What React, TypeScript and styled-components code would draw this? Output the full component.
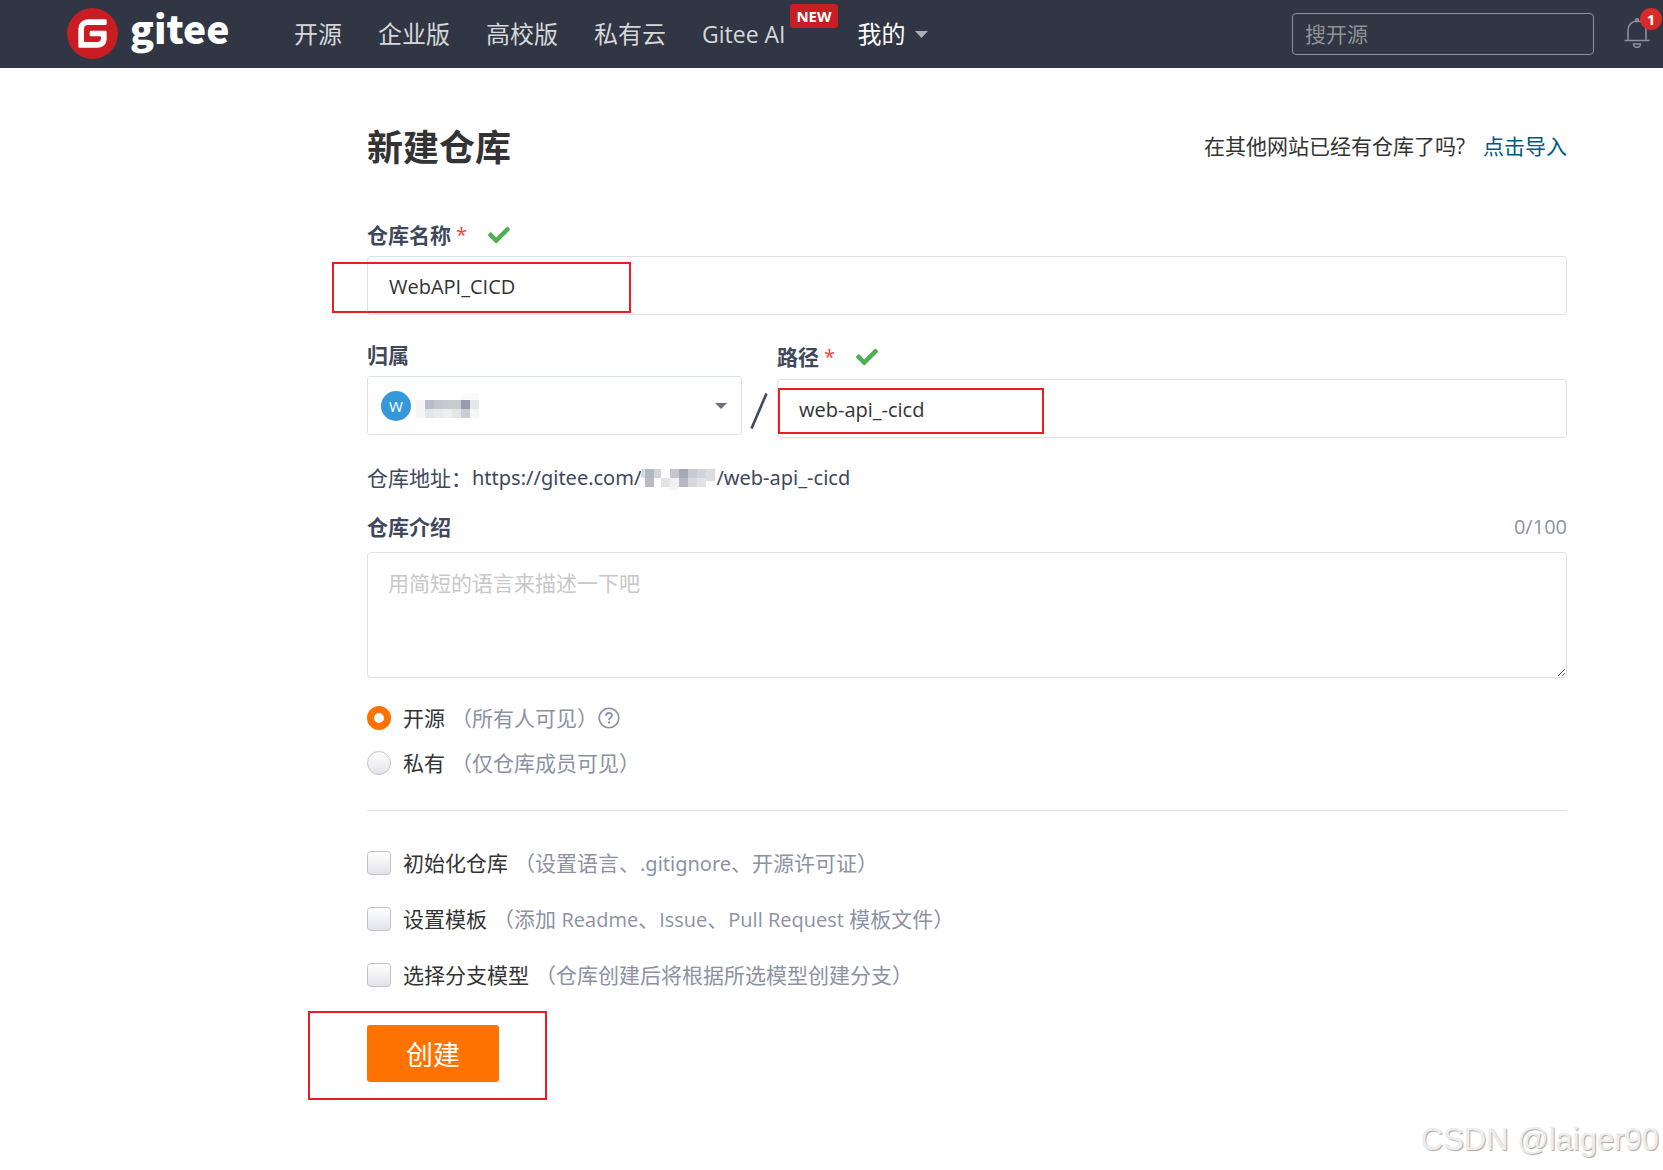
import React from "react";
import styled, { createGlobalStyle } from "styled-components";
import { FaCheck } from "react-icons/fa";

const sans = `"Open Sans", "Noto Sans CJK SC", sans-serif`;
const urlSans = `"Noto Sans", "Noto Sans CJK SC", sans-serif`;

const GlobalStyle = createGlobalStyle`
  *, *::before, *::after { box-sizing: border-box; }
  body { margin: 0; background: #fff; color: #333; font: 21px/28px ${sans}; font-weight: 400; }
  button, input, select, textarea { font-family: inherit; }
  a { text-decoration: none; }
`;

const Page = styled.div`
  position: relative;
  min-height: 100vh;
  overflow: hidden;
`;

const Header = styled.header`
  display: flex;
  align-items: center;
  height: 68px;
  padding: 0 13px 0 67px;
  background: #303643;
`;

const Brand = styled.a`
  display: flex;
  align-items: center;
  gap: 12px;
  width: 227px;
  padding-bottom: 2px;
  color: #fff;
`;

const Wordmark = styled.span`
  padding-bottom: 12px;
  font: 900 39px/52px "Noto Sans CJK SC", sans-serif;
`;

const Nav = styled.nav`
  display: flex;
  flex: 1;
  gap: 36px;
`;

const NavLink = styled.a<{ $active?: boolean; $tagged?: boolean }>`
  position: relative;
  display: flex;
  align-items: center;
  gap: 9px;
  padding-right: ${(p) => (p.$tagged ? 36 : 0)}px;
  color: ${(p) => (p.$active ? "#fff" : "#d6d7d9")};
  font-size: 24px;
  line-height: 36px;
  white-space: nowrap;
`;

const LatinLabel = styled.span`
  font-size: 23px;
`;

const NewTag = styled.span`
  position: absolute;
  top: -12px;
  right: -16px;
  padding: 0 6px;
  border-radius: 3px;
  background: #c71d23;
  color: #fff;
  font-size: 15px;
  font-weight: 700;
  line-height: 24px;
`;

const SearchBox = styled.input`
  width: 302px;
  height: 42px;
  padding: 0 12px;
  border: 1px solid #8c92a4;
  border-radius: 4px;
  background: transparent;
  color: #fff;
  font-size: 21px;
  &::placeholder { color: #8f9297; opacity: 1; }
`;

const BellButton = styled.button`
  position: relative;
  display: flex;
  margin-left: 30px;
  padding: 0 0 2px;
  border: 0;
  background: none;
`;

const BellCount = styled.span`
  position: absolute;
  top: -10px;
  right: -12px;
  width: 22px;
  border-radius: 50%;
  background: #db2828;
  color: #fff;
  font-size: 15px;
  font-weight: 700;
  line-height: 22px;
  text-align: center;
`;

const Main = styled.main`
  padding: 58px 96px 64px 367px;
`;

const TitleRow = styled.div`
  display: flex;
  align-items: center;
  justify-content: space-between;
  margin-bottom: 52px;
`;

const Title = styled.h1`
  margin: 0;
  font-size: 36px;
  font-weight: 700;
  line-height: 44px;
`;

const ImportHint = styled.p`
  margin: 0;
  padding-bottom: 4px;
`;

const ImportLink = styled.a`
  margin-left: 18px;
  color: #005980;
`;

const Form = styled.form`
  display: flex;
  flex-direction: column;
`;

const Field = styled.div<{ $width?: string }>`
  position: relative;
  width: ${(p) => p.$width ?? "auto"};
  flex: ${(p) => (p.$width ? "none" : "1")};
`;

const LabelRow = styled.div<{ $spread?: boolean; $gap?: number }>`
  display: flex;
  align-items: center;
  justify-content: ${(p) => (p.$spread ? "space-between" : "flex-start")};
  height: 28px;
  margin-bottom: ${(p) => p.$gap ?? 6}px;
  padding-bottom: 2px;
`;

const Label = styled.label`
  color: #40485b;
  font-weight: 700;
`;

const Star = styled.span`
  margin: 0 21px 0 5px;
  color: #f44336;
  font-size: 20px;
`;

const Tick = styled(FaCheck)`
  width: 22px;
  height: 22px;
  color: #4caf50;
`;

const TextInput = styled.input`
  display: block;
  width: 100%;
  height: 59px;
  padding: 2px 21px 0;
  border: 1px solid #e0e1e8;
  border-radius: 4px;
  background: #fff;
  color: #333;
  font-size: 20px;
`;

const OwnerRow = styled.div`
  display: flex;
  align-items: flex-start;
  margin-top: 27px;
`;

const PathColumn = styled.div`
  display: flex;
  flex: 1;
  padding-top: 2px;
`;

const SelectShell = styled.div`
  position: relative;
  display: flex;
  align-items: center;
`;

const OwnerSelect = styled.select`
  width: 100%;
  height: 59px;
  border: 1px solid #dce3e8;
  border-radius: 3px;
  background: transparent;
  appearance: none;
`;

const OwnerValue = styled.div`
  position: absolute;
  left: 14px;
  right: 15px;
  display: flex;
  align-items: center;
  gap: 5px;
  pointer-events: none;
`;

const Avatar = styled.span`
  width: 30px;
  border-radius: 50%;
  background: #3498db;
  color: #fff;
  font-size: 15px;
  line-height: 30px;
  text-align: center;
`;

const SelectCaret = styled.span`
  margin-left: auto;
  border: 6px solid transparent;
  border-top-color: #697080;
  border-bottom: 0;
`;

const Slash = styled.svg`
  flex: none;
  margin: 51px 9px 0 8px;
`;

const Address = styled.p`
  display: flex;
  align-items: center;
  margin: 26px 0 22px;
  color: #40485b;
`;

const Url = styled.span`
  display: flex;
  align-items: center;
  font-family: ${urlSans};
  font-size: 20px;
`;

const Counter = styled.span`
  color: #8c92a4;
  font-size: 20px;
`;

const Description = styled.textarea`
  display: block;
  width: 100%;
  height: 126px;
  padding: 16px 20px;
  border: 1px solid #e0e1e8;
  border-radius: 4px;
  font-size: 21px;
  line-height: 28px;
  resize: vertical;
  &::placeholder { color: #c8c8c8; opacity: 1; }
`;

const Options = styled.div<{ $gap: number }>`
  display: flex;
  flex-direction: column;
  gap: ${(p) => p.$gap}px;
`;

const Visibility = styled(Options)`
  margin-top: 26px;
`;

const Option = styled.label`
  display: flex;
  align-items: center;
  height: 28px;
  white-space: nowrap;
`;

const Hint = styled.span`
  margin-left: 6px;
  color: #8c92a4;
`;

const LatinText = styled.span<{ $plain?: boolean }>`
  font-family: ${(p) => (p.$plain ? urlSans : "inherit")};
  font-size: 20px;
`;

const Radio = styled.input`
  width: 24px;
  height: 24px;
  margin: 0 12px 0 0;
  border: 1px solid #c3c4c8;
  border-radius: 50%;
  background: linear-gradient(#fff, #e2e4ea);
  appearance: none;
  &:checked { border: 7px solid #fe7300; background: #fff; }
`;

const Checkbox = styled.input`
  width: 24px;
  height: 24px;
  margin: 0 12px 0 0;
  border: 1px solid #c3c4c8;
  border-radius: 4px;
  background: linear-gradient(#fff, #e2e4ea);
  appearance: none;
`;

const Divider = styled.hr`
  width: 100%;
  margin: 33px 0 38px;
  border: 0;
  border-top: 1px solid #dce3e8;
`;

const SubmitRow = styled.div`
  position: relative;
  align-self: flex-start;
  margin-top: 36px;
`;

const Submit = styled.button`
  display: block;
  width: 132px;
  height: 57px;
  padding: 0;
  border: 0;
  border-radius: 3px;
  background: #fe7300;
  color: #fff;
  font-size: 27px;
`;

const Marker = styled.span<{ $box: [number, number, number, number] }>`
  position: absolute;
  left: ${(p) => p.$box[0]}px;
  bottom: ${(p) => p.$box[1]}px;
  width: ${(p) => p.$box[2]}px;
  height: ${(p) => p.$box[3]}px;
  border: 2px solid #ed1c24;
  pointer-events: none;
`;

const Watermark = styled.span`
  position: absolute;
  right: 4px;
  bottom: 12px;
  color: #ededed;
  font: 31px/36px "Liberation Sans", sans-serif;
  text-shadow: 1px 1px 1px #a8a8a8;
`;

type Tile = [number, number, number, number, string];

const ownerTiles: Tile[] = [
  [0, 7, 9, 18, "#f5f5f6"], [9, 7, 9, 9, "#b9bcc6"], [18, 7, 9, 9, "#c3c5cd"],
  [27, 7, 18, 9, "#c8cad1"], [45, 7, 9, 9, "#999dab"], [54, 7, 9, 9, "#e6e7ea"],
  [9, 16, 9, 9, "#e4e5e8"], [18, 16, 9, 9, "#e9eaec"], [27, 16, 9, 9, "#eeeef0"],
  [36, 16, 9, 9, "#e4e5e9"], [45, 16, 9, 9, "#cbcdd3"], [54, 16, 9, 9, "#f6f6f7"],
  [45, 0, 18, 7, "#fafafb"],
];

const urlTiles: Tile[] = [
  [0, 2, 4, 9, "#d9dadd"], [4, 2, 9, 9, "#b4b7c1"], [13, 2, 7, 9, "#d3d5da"],
  [4, 11, 9, 9, "#b9bcc6"], [20, 11, 9, 9, "#e3e4e8"], [29, 2, 9, 9, "#c4c6ce"],
  [38, 2, 9, 9, "#a5a9b5"], [47, 2, 9, 9, "#c9cbd2"], [56, 2, 9, 9, "#d1d3d9"],
  [65, 2, 9, 12, "#dcdde2"], [29, 11, 9, 9, "#f0f0f2"], [38, 11, 9, 9, "#b5b8c2"],
  [47, 11, 9, 9, "#d7d8dd"], [56, 11, 9, 9, "#e2e3e7"], [29, 20, 9, 3, "#f4f4f5"],
];

function Mosaic({ tiles, width, height }: { tiles: Tile[]; width: number; height: number }) {
  return (
    <svg width={width} height={height} aria-hidden="true" shapeRendering="crispEdges">
      {tiles.map(([x, y, w, h, fill]) => (
        <rect key={`${x}-${y}`} x={x} y={y} width={w} height={h} fill={fill} />
      ))}
    </svg>
  );
}

function Logo() {
  return (
    <svg width="51" height="51" viewBox="0 0 24 24" aria-hidden="true">
      <circle cx="12" cy="12" r="11" fill="#fff" />
      <path
        fill="#c71d23"
        d="M11.984 0A12 12 0 0 0 0 12a12 12 0 0 0 12 12 12 12 0 0 0 12-12A12 12 0 0 0 12 0a12 12 0 0 0-.016 0zm6.09 5.333c.328 0 .593.266.592.593v1.482a.594.594 0 0 1-.593.592H9.777c-.982 0-1.778.796-1.778 1.778v5.63c0 .327.266.592.593.592h5.63c.982 0 1.778-.796 1.778-1.778v-.296a.593.593 0 0 0-.592-.593h-4.15a.592.592 0 0 1-.592-.592v-1.482a.593.593 0 0 1 .593-.592h6.815c.327 0 .593.265.593.592v3.408a4 4 0 0 1-4 4H5.926a.593.593 0 0 1-.593-.593V9.778a4.444 4.444 0 0 1 4.445-4.444h8.296Z"
      />
    </svg>
  );
}

function Bell() {
  return (
    <svg width="26" height="31" viewBox="0 0 26 31" fill="none" stroke="#8c92a4" strokeWidth="1.5" aria-hidden="true">
      <path d="M4 22.500V12a9 9 0 0 1 18 0V22.500M.5 22.500h25" />
      <circle cx="13" cy="2.200" r="1.500" />
      <path d="M9.500 26h7a3.500 3.300 0 0 1-7 0z" />
    </svg>
  );
}

function HelpIcon() {
  return (
    <svg width="22" height="22" viewBox="0 0 22 22" fill="none" stroke="#8c92a4" strokeWidth="1.600" aria-hidden="true">
      <circle cx="11" cy="11" r="9.800" />
      <path d="M8 8.800c0-3.800 6-3.700 6-.3 0 2.300-3 2.200-3 4.500" strokeWidth="1.900" />
      <path d="M11 14.500v2" strokeWidth="2" />
    </svg>
  );
}

export default function App() {
  return (
    <Page>
      <GlobalStyle />
      <Header>
        <Brand href="#" aria-label="gitee">
          <Logo />
          <Wordmark>gitee</Wordmark>
        </Brand>
        <Nav>
          <NavLink href="#">开源</NavLink>
          <NavLink href="#">企业版</NavLink>
          <NavLink href="#">高校版</NavLink>
          <NavLink href="#">私有云</NavLink>
          <NavLink href="#" $tagged>
            <LatinLabel>Gitee AI</LatinLabel>
            <NewTag>NEW</NewTag>
          </NavLink>
          <NavLink href="#" $active>
            我的
            <svg width="13" height="7" aria-hidden="true">
              <path d="M0 0h13L6.500 7z" fill="#acafb4" />
            </svg>
          </NavLink>
        </Nav>
        <SearchBox type="search" placeholder="搜开源" aria-label="搜开源" />
        <BellButton type="button" aria-label="通知">
          <Bell />
          <BellCount>1</BellCount>
        </BellButton>
      </Header>

      <Main>
        <TitleRow>
          <Title>新建仓库</Title>
          <ImportHint>
            在其他网站已经有仓库了吗?
            <ImportLink href="#">点击导入</ImportLink>
          </ImportHint>
        </TitleRow>

        <Form onSubmit={(e) => e.preventDefault()}>
          <Field>
            <LabelRow>
              <Label htmlFor="name">仓库名称</Label>
              <Star>*</Star>
              <Tick aria-hidden />
            </LabelRow>
            <TextInput id="name" defaultValue="WebAPI_CICD" />
            <Marker $box={[-35, 2, 299, 51]} />
          </Field>

          <OwnerRow>
            <Field $width="375px">
              <LabelRow>
                <Label htmlFor="owner">归属</Label>
              </LabelRow>
              <SelectShell>
                <OwnerSelect id="owner">
                  <option />
                </OwnerSelect>
                <OwnerValue>
                  <Avatar>W</Avatar>
                  <Mosaic tiles={ownerTiles} width={64} height={25} />
                  <SelectCaret />
                </OwnerValue>
              </SelectShell>
            </Field>
            <Slash width="18" height="36" viewBox="0 0 18 36" aria-hidden="true">
              <path d="M1.500 35.500L16.500.5" stroke="#40485b" strokeWidth="2.600" />
            </Slash>
            <PathColumn>
              <Field>
                <LabelRow $gap={7}>
                  <Label htmlFor="path">路径</Label>
                  <Star>*</Star>
                  <Tick aria-hidden />
                </LabelRow>
                <TextInput id="path" defaultValue="web-api_-cicd" />
                <Marker $box={[1, 4, 266, 46]} />
              </Field>
            </PathColumn>
          </OwnerRow>

          <Address>
            仓库地址：
            <Url>
              https://gitee.com/
              <Mosaic tiles={urlTiles} width={75} height={23} />
              /web-api_-cicd
            </Url>
          </Address>

          <Field>
            <LabelRow $spread $gap={10}>
              <Label htmlFor="description">仓库介绍</Label>
              <Counter>0/100</Counter>
            </LabelRow>
            <Description id="description" placeholder="用简短的语言来描述一下吧" />
          </Field>

          <Visibility $gap={17}>
            <Option>
              <Radio type="radio" name="visibility" defaultChecked />
              开源<Hint>（所有人可见）</Hint>
              <HelpIcon />
            </Option>
            <Option>
              <Radio type="radio" name="visibility" />
              私有<Hint>（仅仓库成员可见）</Hint>
            </Option>
          </Visibility>

          <Divider />

          <Options $gap={28}>
            <Option>
              <Checkbox type="checkbox" />
              初始化仓库
              <Hint>
                （设置语言、<LatinText $plain>.gitignore</LatinText>、开源许可证）
              </Hint>
            </Option>
            <Option>
              <Checkbox type="checkbox" />
              设置模板
              <Hint>
                （添加 <LatinText>Readme</LatinText>、<LatinText>Issue</LatinText>、
                <LatinText>Pull Request</LatinText> 模板文件）
              </Hint>
            </Option>
            <Option>
              <Checkbox type="checkbox" />
              选择分支模型
              <Hint>（仓库创建后将根据所选模型创建分支）</Hint>
            </Option>
          </Options>

          <SubmitRow>
            <Submit type="submit">创建</Submit>
            <Marker $box={[-59, -18, 239, 89]} />
          </SubmitRow>
        </Form>
      </Main>
      <Watermark>CSDN @laiger90</Watermark>
    </Page>
  );
}
